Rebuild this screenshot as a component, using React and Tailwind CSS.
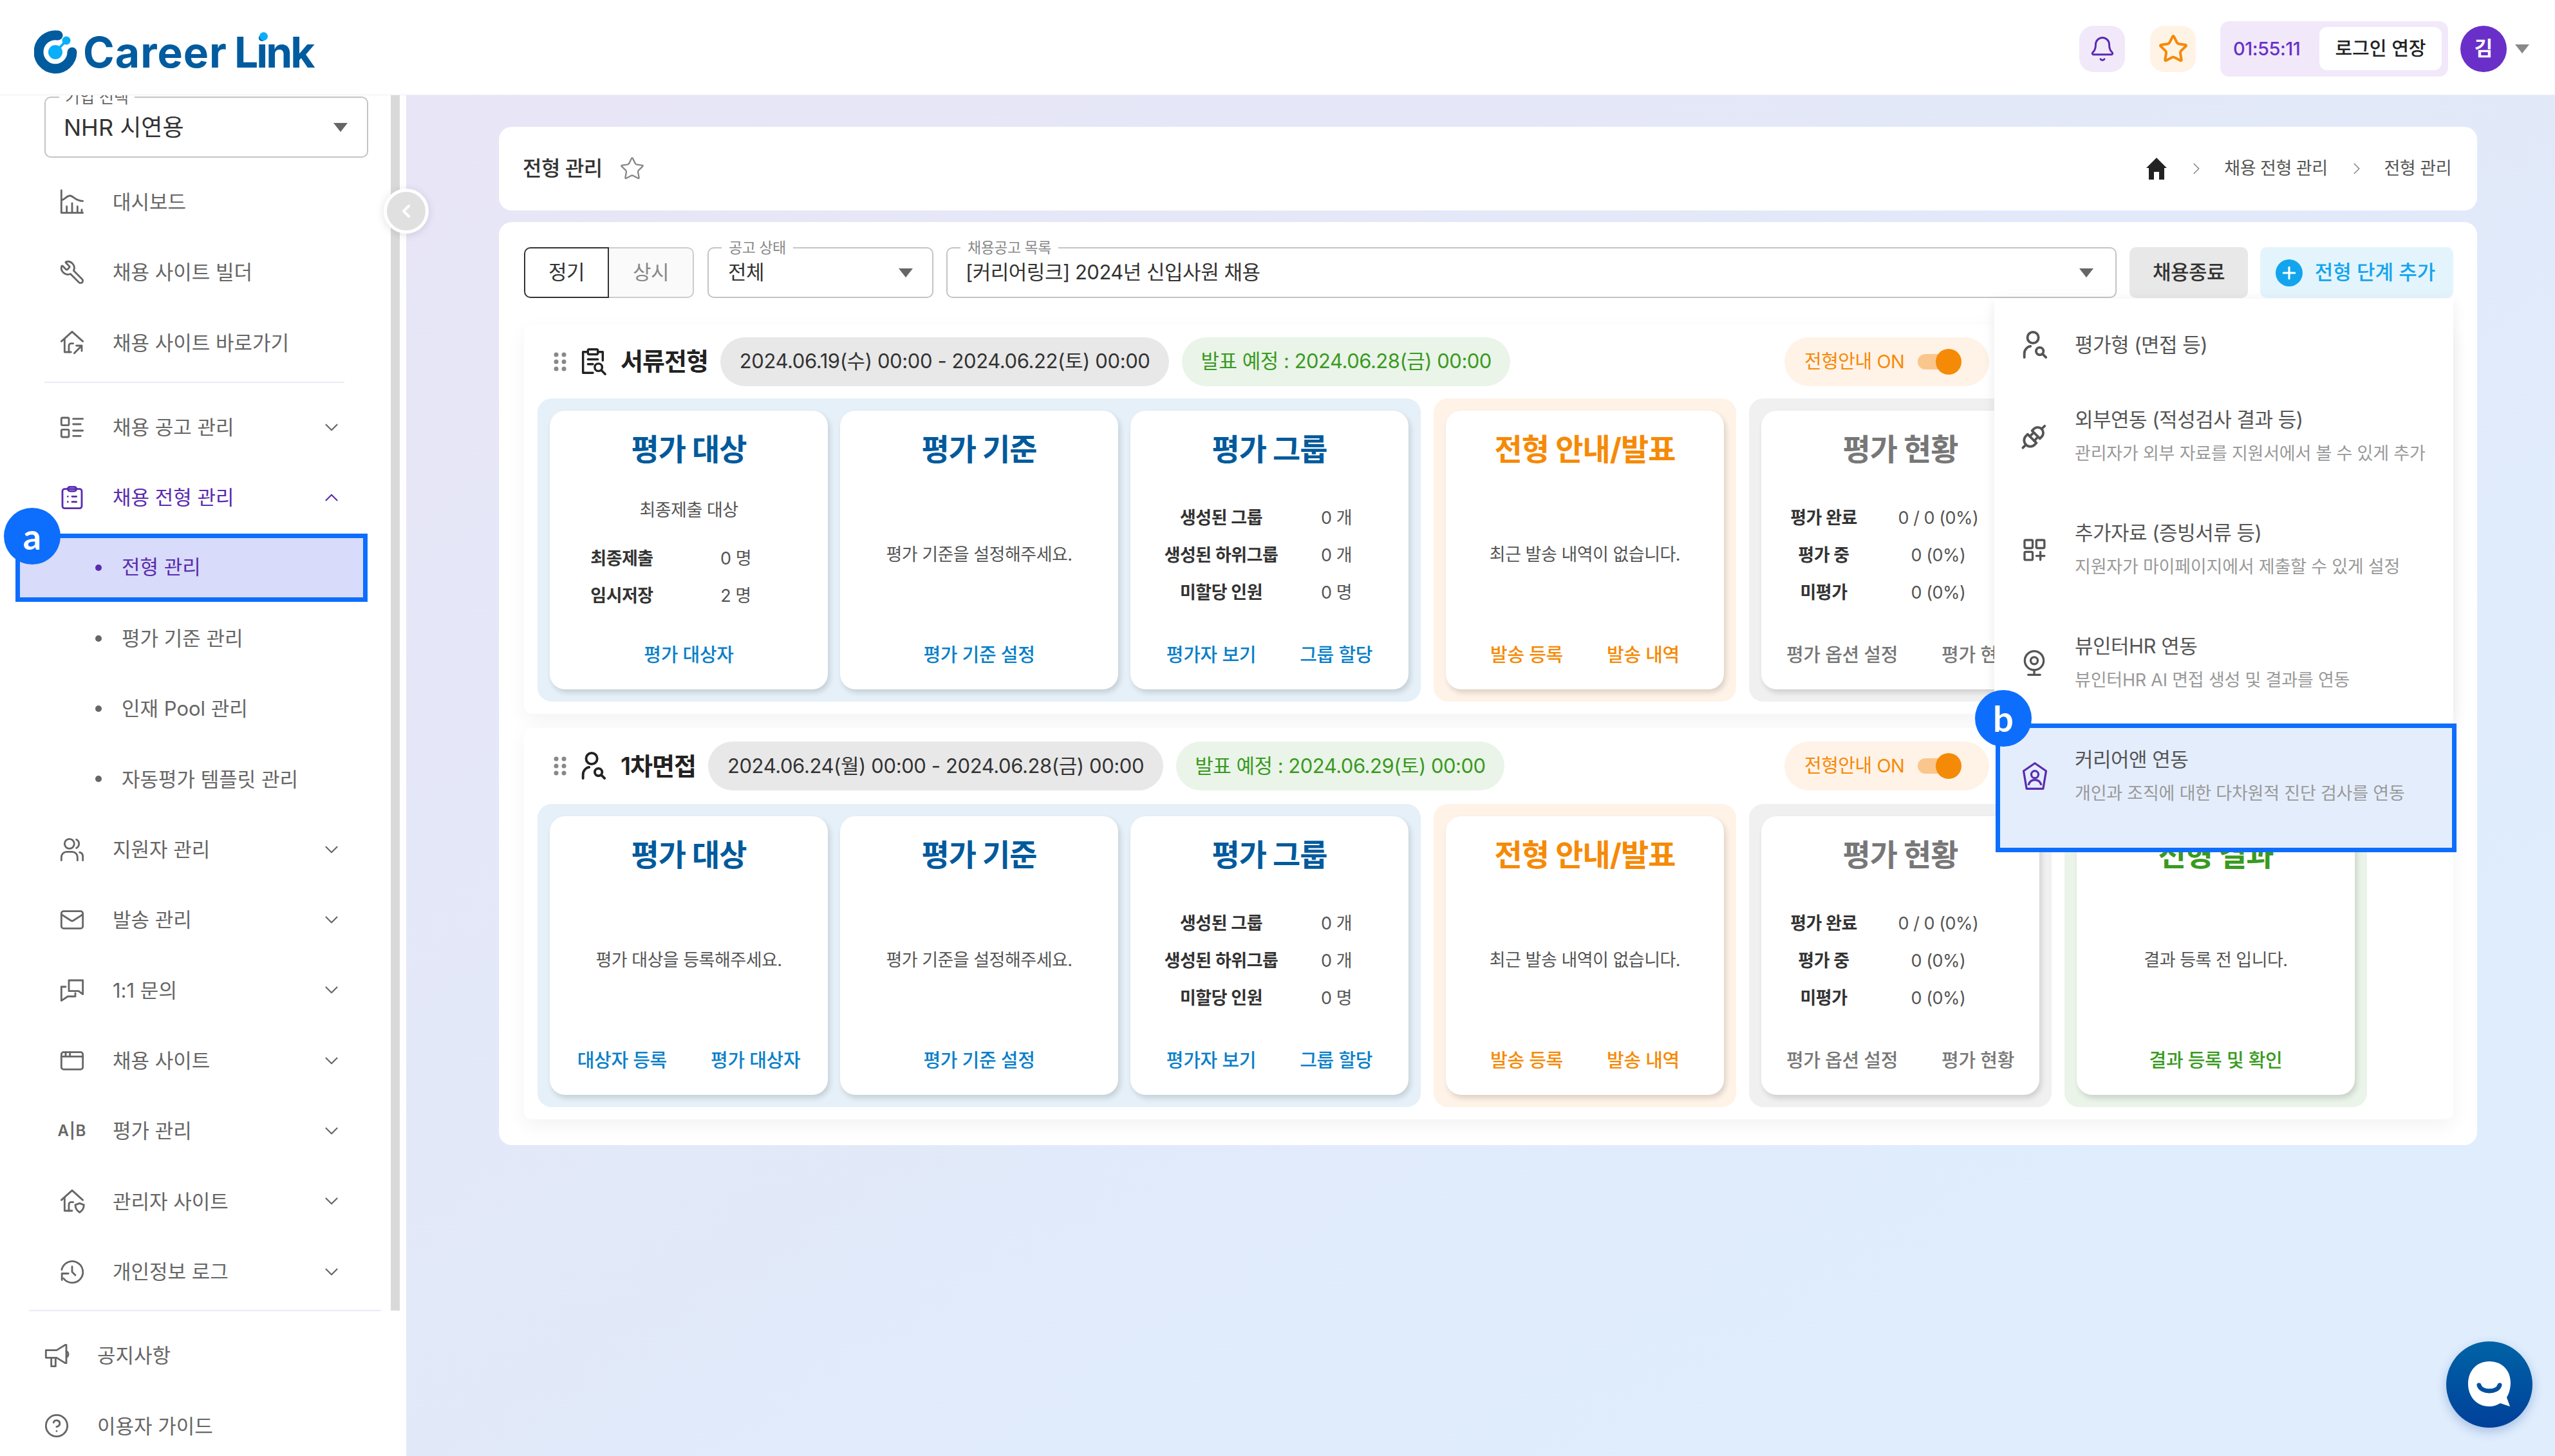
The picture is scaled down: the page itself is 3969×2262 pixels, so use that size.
import React from 'react';
import { ChevronDown, ChevronUp, ChevronLeft, ChevronRight, Wrench, Mail, AppWindow, CircleHelp, Star, Bell, Plus, Webcam } from 'lucide-react';

const Svg = ({ children, size = 40, className = '', stroke = 1.7 }) => (
  <svg width={size} height={size} viewBox="0 0 24 24" fill="none" stroke="currentColor" strokeWidth={stroke} strokeLinecap="round" strokeLinejoin="round" className={className}>
    {children}
  </svg>
);

const ChartIcon = () => (
  <Svg size={42}>
    <path d="M2 1v21h20" />
    <path d="M2 10c3 0 5-4 8-4s5 5 12 5" />
    <path d="M7 22v-6M12 22v-9M17 22v-6M21 22v-3" />
  </Svg>
);
const HomeLinkIcon = () => (
  <Svg size={42}>
    <path d="M2 11 12 2l10 9" />
    <path d="M5 9v12h6" />
    <path d="M9 21v-6a2 2 0 0 1 2-2h2" />
    <path d="M14 22l7-7M16 15h5v5" />
  </Svg>
);
const ListIcon = () => (
  <Svg>
    <rect x="2" y="3" width="7" height="7" rx="1" />
    <rect x="2" y="14" width="7" height="7" rx="1" />
    <path d="M13 4h9M13 9h7M13 15h9M13 20h7" />
  </Svg>
);
const ClipboardIcon = () => (
  <Svg>
    <rect x="3" y="4" width="18" height="18" rx="2" />
    <rect x="8" y="2" width="8" height="4" rx="2" />
    <path d="M8 11h.01M12 11h4M8 16h.01M12 16h4" />
  </Svg>
);
const UsersIcon = () => (
  <Svg>
    <circle cx="9.500" cy="6.500" r="4.500" />
    <path d="M16 2.500a4.500 4.500 0 0 1 0 8" />
    <path d="M2 22v-3a5 5 0 0 1 5-5h5a5 5 0 0 1 5 5v3" />
    <path d="M19 14.500a4 4 0 0 1 3 4V22" />
  </Svg>
);
const ChatIcon = () => (
  <Svg>
    <path d="M9 3h13v13l-4-3H9z" />
    <path d="M6 9H2v13l6-4h7v-3" />
  </Svg>
);
const AdminHomeIcon = () => (
  <Svg size={42}>
    <path d="M2 11 12 2l10 9" />
    <path d="M5 9v12h7" />
    <path d="M9 21v-6a2 2 0 0 1 2-2h2" />
    <path d="M15 15.500l4-1.500 4 1.500c0 3.500-1.500 5.500-4 7-2.500-1.500-4-3.500-4-7z" />
  </Svg>
);
const HistoryIcon = () => (
  <Svg>
    <path d="M2.300 10A10 10 0 1 1 4 18" />
    <path d="M2.500 19.500v-6h6" />
    <path d="M12 7v5l3 3" />
  </Svg>
);
const MegaphoneIcon = () => (
  <Svg>
    <path d="M2 7h10l8-5h1v17h-1l-8-5H2z" />
    <path d="M21 8a3 3 0 0 1 0 5.500" />
    <path d="M7 14v8h4v-8" />
  </Svg>
);
const SearchDocIcon = () => (
  <Svg size={46} stroke={1.8}>
    <path d="M7 4H4v17h8" />
    <path d="M17 4h3v7" />
    <rect x="8" y="2" width="8" height="4" rx="1" />
    <path d="M8 10h8M8 14h4" />
    <circle cx="16.500" cy="16.500" r="3" />
    <path d="M19 19l3 3" />
  </Svg>
);
const PersonSearchIcon = ({ size = 46 }) => (
  <Svg size={size} stroke={2}>
    <circle cx="11" cy="6" r="4.500" />
    <path d="M4 22v-3a6 6 0 0 1 5-6" />
    <circle cx="16.500" cy="17" r="3" />
    <path d="M19 19.500l2.500 2.500" />
  </Svg>
);
const PlugIcon = () => (
  <Svg size={46} stroke={2}>
    <g transform="rotate(45 12 12)">
      <path d="M7.500 10h9V8a4.500 4.500 0 0 0-9 0z" />
      <path d="M12 3.500V0" />
      <path d="M7 14.500h10v2a5 5 0 0 1-10 0z" />
      <path d="M12 21.500V25" />
      <path d="M9.500 14.500v-3M14.500 14.500v-3" />
    </g>
  </Svg>
);
const GridPlusIcon = () => (
  <Svg stroke={2}>
    <rect x="3" y="3" width="7.500" height="7.500" rx="1" />
    <rect x="14" y="3" width="7.500" height="7.500" rx="1" />
    <rect x="3" y="14" width="7.500" height="7.500" rx="1" />
    <path d="M17.750 14v7.500M14 17.750h7.500" />
  </Svg>
);
const PentagonIcon = () => (
  <svg width="44" height="46" viewBox="0 0 44 50" fill="none" stroke="#5a2bb0" strokeWidth="3.500" strokeLinejoin="round">
    <path d="M22 3 41 16l-5 30H8L3 16z" />
    <circle cx="22" cy="22" r="6" />
    <path d="M11 40c2-7 6-9 11-9s9 2 11 9" />
  </svg>
);
const HomeIcon = () => (
  <svg width="32" height="34" viewBox="0 0 32 34" className="text-[#222]">
    <path d="M16 0 32 16h-4v18h-8V22h-8v12H4V16H0z" fill="currentColor" />
  </svg>
);
const Caret = ({ className = '' }) => (
  <svg width="22" height="14" viewBox="0 0 22 14" className={className}>
    <path d="M0 0h22L11 14z" fill="currentColor" />
  </svg>
);
const DragDots = () => (
  <svg width="20" height="30" viewBox="0 0 20 30" fill="#888">
    {[4, 15, 26].map((y) => (
      <g key={y}>
        <circle cx="4" cy={y} r="3.500" />
        <circle cx="16" cy={y} r="3.500" />
      </g>
    ))}
  </svg>
);

const Logo = () => (
  <div className="flex items-center ml-[53px] mt-[14px]">
    <svg width="68" height="68" viewBox="0 0 68 68" fill="none">
      <path d="M37 8A26 26 0 1 0 59 34" stroke="#005b9f" strokeWidth="15" strokeLinecap="round" />
      <path d="M33 34 50 16" stroke="#0aaefb" strokeWidth="4" />
      <circle cx="33" cy="34" r="11" fill="#0aaefb" />
      <circle cx="50" cy="16" r="6.500" fill="#0aaefb" />
    </svg>
    <span className="ml-[8px] text-[66px] leading-none font-bold text-[#005b9f] tracking-[1px]">
      Career
      <span className="relative ml-[11px] tracking-[-3px]">
        Link
        <span className="absolute left-[39px] top-[9px] w-[13px] h-[13px] rounded-full bg-[#0aaefb]" />
      </span>
    </span>
  </div>
);

const Header = () => (
  <header className="relative z-20 h-[148px] bg-white flex items-center justify-between border-b border-[#eceef7]">
    <Logo />
    <div className="flex items-center mt-[4px]">
      <div className="w-[71px] h-[72px] rounded-[22px] bg-[#f1e9fa] flex items-center justify-center text-[#5a2bb0]">
        <Bell size={42} strokeWidth={1.7} />
      </div>
      <div className="ml-[39px] w-[71px] h-[72px] rounded-[22px] bg-[#fff3e6] flex items-center justify-center text-[#f58a07]">
        <Star size={48} strokeWidth={2} />
      </div>
      <div className="ml-[38px] w-[354px] h-[86px] rounded-[14px] bg-[#f1e9fa] flex items-center pl-[20px] pr-[10px] justify-between">
        <span className="text-[29px] font-medium text-[#6b30c9] tracking-[-0.5px]">01:55:11</span>
        <button className="w-[190px] h-[67px] rounded-[12px] bg-white text-[29px] font-medium text-[#222]">로그인 연장</button>
      </div>
      <div className="ml-[19px] w-[72px] h-[72px] rounded-full bg-[#6a2fc8] flex items-center justify-center text-white text-[31px] font-bold">김</div>
      <Caret className="ml-[13px] mr-[40px] text-[#888]" />
    </div>
  </header>
);

const SideItem = ({ icon, label, open, hasChevron = true, active }) => (
  <div className={`h-[109.33px] flex items-center pl-[92px] pr-[99px] ${active ? 'text-[#5a2bb0]' : 'text-[#666]'}`}>
    <span className="w-[40px] flex justify-center">{icon}</span>
    <span className="ml-[43px] text-[31px] leading-none flex-1">{label}</span>
    {hasChevron && (open ? <ChevronUp size={34} strokeWidth={1.5} /> : <ChevronDown size={34} strokeWidth={1.5} />)}
  </div>
);

const SubItem = ({ label }) => (
  <div className="h-[109.33px] flex items-center pl-[148px] text-[#666]">
    <span className="w-[10px] h-[10px] rounded-full bg-[#666]" />
    <span className="ml-[31px] text-[31px] leading-none">{label}</span>
  </div>
);

const Sidebar = () => (
  <aside className="relative w-[631px] shrink-0 h-full bg-white overflow-hidden">
    <div className="absolute left-[607px] top-0 w-[14px] h-[1888px] bg-[#d9d9d9]" />
    <div className="pt-[2px] pl-[69px]">
      <div className="relative w-[503px] h-[95px] border-2 border-[#c4c4c4] rounded-[10px] flex items-center justify-between pl-[28px] pr-[30px]">
        <span className="absolute left-[21px] -top-[16px] bg-white px-[9px] text-[25px] leading-[30px] text-[#666]">기업 선택</span>
        <span className="text-[36px] text-[#333]">NHR 시연용</span>
        <Caret className="text-[#666]" />
      </div>
    </div>
    <div className="mt-[14px]">
      <SideItem hasChevron={false} icon={<ChartIcon />} label="대시보드" />
      <SideItem hasChevron={false} icon={<Wrench size={40} strokeWidth={1.7} className="-scale-x-100" />} label="채용 사이트 빌더" />
      <SideItem hasChevron={false} icon={<HomeLinkIcon />} label="채용 사이트 바로가기" />
    </div>
    <div className="mt-[6px] mb-[14px] ml-[69px] w-[466px] h-[2px] bg-[#ebebf7]" />
    <SideItem icon={<ListIcon />} label="채용 공고 관리" />
    <SideItem active open icon={<ClipboardIcon />} label="채용 전형 관리" />
    <div className="h-[109.33px] flex items-center">
      <div className="ml-[24px] w-[547px] h-[106px] bg-[#d8dbf9] border-[7px] border-[#0d6efd] flex items-center pl-[117px] text-[#5a2bb0]">
        <span className="w-[10px] h-[10px] rounded-full bg-[#5a2bb0]" />
        <span className="ml-[31px] text-[31px] leading-none -mt-[4px]">전형 관리</span>
      </div>
    </div>
    <SubItem label="평가 기준 관리" />
    <SubItem label="인재 Pool 관리" />
    <SubItem label="자동평가 템플릿 관리" />
    <SideItem icon={<UsersIcon />} label="지원자 관리" />
    <SideItem icon={<Mail size={40} strokeWidth={1.7} />} label="발송 관리" />
    <SideItem icon={<ChatIcon />} label="1:1 문의" />
    <SideItem icon={<AppWindow size={40} strokeWidth={1.7} />} label="채용 사이트" />
    <SideItem icon={<span className="text-[24px] font-semibold tracking-[1px]">A|B</span>} label="평가 관리" />
    <SideItem icon={<AdminHomeIcon />} label="관리자 사이트" />
    <SideItem icon={<HistoryIcon />} label="개인정보 로그" />
    <div className="mt-[5px] mb-[14px] ml-[45px] w-[547px] h-[2px] bg-[#ebebf7]" />
    <div className="h-[109.33px] flex items-center pl-[68px] text-[#666]">
      <MegaphoneIcon />
      <span className="ml-[43px] text-[31px] leading-none">공지사항</span>
    </div>
    <div className="h-[109.33px] flex items-center pl-[68px] text-[#666]">
      <CircleHelp size={40} strokeWidth={1.7} />
      <span className="ml-[43px] text-[31px] leading-none">이용자 가이드</span>
    </div>
  </aside>
);

const tones = {
  blue: { group: 'bg-[#e5f0f8]', title: 'text-[#005a9c]', link: 'text-[#0a7fc9]' },
  orange: { group: 'bg-[#fff2e7]', title: 'text-[#f58a07]', link: 'text-[#f58a07]' },
  gray: { group: 'bg-[#f0f0f0]', title: 'text-[#777]', link: 'text-[#777]' },
  green: { group: 'bg-[#eaf4e9]', title: 'text-[#3a9a1f]', link: 'text-[#3a9a1f]' },
};

const Rows = ({ rows, labelW, valueW }) => (
  <div className="flex flex-col gap-[22px]">
    {rows.map(([label, value]) => (
      <div key={label} className="flex items-center justify-center text-[27px] leading-[36px] tracking-[-0.5px]">
        <span className={`${labelW} text-center font-semibold text-[#333]`}>{label}</span>
        <span className={`${valueW} text-center text-[#555]`}>{value}</span>
      </div>
    ))}
  </div>
);

const Card = ({ tone, title, links, children }) => (
  <div className="w-[432px] h-full bg-white rounded-[24px] shadow-[3px_5px_8px_rgba(0,0,0,0.14)] flex flex-col">
    <div className={`h-[114px] pt-[6px] flex items-center justify-center text-[47px] font-bold tracking-[-1px] ${tones[tone].title}`}>{title}</div>
    <div className="flex-1 pt-[8px] flex flex-col items-center justify-center text-[27px] tracking-[-0.5px] text-[#555]">{children}</div>
    <div className={`h-[106px] flex items-start justify-center gap-[68px] pt-[33px] text-[29px] leading-[40px] font-medium tracking-[-0.3px] ${tones[tone].link}`}>
      {links.map((l) => (
        <span key={l}>{l}</span>
      ))}
    </div>
  </div>
);

const Group = ({ tone, children }) => (
  <div className={`h-full rounded-[22px] py-[19px] px-[19px] flex gap-[19px] ${tones[tone].group}`}>{children}</div>
);

const Stage = ({ icon, title, dates, notice, first, className = '' }) => (
  <section className={`bg-white rounded-[12px] shadow-[0_10px_30px_rgba(0,0,0,0.05)] pl-[21px] pb-[19px] ${className}`}>
    <div className={`flex items-center pl-[25px] pr-[721px] ${first ? 'h-[115px]' : 'h-[118px]'}`}>
      <DragDots />
      <span className="ml-[18px] w-[46px] flex justify-center text-[#222]">{icon}</span>
      <span className="ml-[20px] text-[38px] font-semibold tracking-[-1px] text-[#222]">{title}</span>
      <span className="ml-[19px] h-[76px] rounded-full bg-[#e8e8e8] px-[30px] flex items-center text-[31px] font-normal tracking-[-0.4px] text-[#333]">{dates}</span>
      <span className="ml-[20px] h-[76px] rounded-full bg-[#eaf4e9] px-[29px] flex items-center text-[31px] tracking-[-0.5px] text-[#3a9a1f]">{notice}</span>
      <div className="ml-auto h-[76px] w-[318px] rounded-full bg-[#fff2e7] flex items-center pl-[31px] text-[29px] tracking-[-0.5px] text-[#f58a07]">
        전형안내 ON
        <div className="relative ml-[21px] w-[58px] h-[24px] rounded-full bg-[#fbc68c]">
          <span className="absolute -right-[10px] -top-[8px] w-[40px] h-[40px] rounded-full bg-[#f58a07]" />
        </div>
      </div>
    </div>
    <div className="h-[471px] flex gap-5">
      <Group tone="blue">
        <Card tone="blue" title="평가 대상" links={first ? ['평가 대상자'] : ['대상자 등록', '평가 대상자']}>
          {first ? (
            <>
              <span className="mb-[37px] -mt-[8px]">최종제출 대상</span>
              <Rows rows={[['최종제출', '0 명'], ['임시저장', '2 명']]} labelW="w-[146px]" valueW="w-[208px]" />
            </>
          ) : (
            '평가 대상을 등록해주세요.'
          )}
        </Card>
        <Card tone="blue" title="평가 기준" links={['평가 기준 설정']}>
          평가 기준을 설정해주세요.
        </Card>
        <Card tone="blue" title="평가 그룹" links={['평가자 보기', '그룹 할당']}>
          <Rows rows={[['생성된 그룹', '0 개'], ['생성된 하위그룹', '0 개'], ['미할당 인원', '0 명']]} labelW="w-[208px]" valueW="w-[150px]" />
        </Card>
      </Group>
      <Group tone="orange">
        <Card tone="orange" title="전형 안내/발표" links={['발송 등록', '발송 내역']}>
          최근 발송 내역이 없습니다.
        </Card>
      </Group>
      <Group tone="gray">
        <Card tone="gray" title="평가 현황" links={['평가 옵션 설정', '평가 현황']}>
          <Rows rows={[['평가 완료', '0 / 0 (0%)'], ['평가 중', '0 (0%)'], ['미평가', '0 (0%)']]} labelW="w-[118px]" valueW="w-[238px]" />
        </Card>
      </Group>
      <Group tone="green">
        <Card tone="green" title="전형 결과" links={['결과 등록 및 확인']}>
          결과 등록 전 입니다.
        </Card>
      </Group>
    </div>
  </section>
);

const Bubble = ({ letter, className }) => (
  <div className={`absolute z-30 w-[88px] h-[88px] rounded-full bg-[#0d6efd] flex items-center justify-center text-white text-[56px] leading-none font-bold font-['Lato',sans-serif] ${className}`}>
    {letter}
  </div>
);

const MenuText = ({ title, sub }) => (
  <div>
    <div className="text-[31px] leading-[40px] text-[#555] tracking-[-0.5px]">{title}</div>
    {sub && <div className="mt-[14px] text-[27px] leading-[38px] text-[#999] tracking-[-0.2px]">{sub}</div>}
  </div>
);

const MenuItem = ({ icon, title, sub }) => (
  <div className="h-[176px] flex items-center">
    <span className="w-[125px] pr-[2px] flex justify-center text-[#555]">{icon}</span>
    <MenuText title={title} sub={sub} />
  </div>
);

const StageMenu = () => (
  <div className="absolute z-10 left-[2467px] top-[316px] w-[713px] h-[666px] bg-white shadow-[0_4px_20px_rgba(0,0,0,0.08)]">
    <div className="h-[126px] pt-[18px] flex items-center">
      <span className="w-[125px] pr-[2px] flex justify-center text-[#555]"><PersonSearchIcon /></span>
      <MenuText title="평가형 (면접 등)" />
    </div>
    <MenuItem icon={<PlugIcon />} title="외부연동 (적성검사 결과 등)" sub="관리자가 외부 자료를 지원서에서 볼 수 있게 추가" />
    <MenuItem icon={<GridPlusIcon />} title="추가자료 (증빙서류 등)" sub="지원자가 마이페이지에서 제출할 수 있게 설정" />
    <MenuItem icon={<Webcam size={44} strokeWidth={1.8} />} title="뷰인터HR 연동" sub="뷰인터HR AI 면접 생성 및 결과를 연동" />
    <div className="relative z-20 ml-[2px] mt-[6px] w-[716px] h-[200px] bg-[#e4edfc] border-[7px] border-[#0d6efd] flex items-center pb-[36px]">
      <span className="w-[116px] pr-[8px] flex justify-center"><PentagonIcon /></span>
      <MenuText title="커리어앤 연동" sub="개인과 조직에 대한 다차원적 진단 검사를 연동" />
    </div>
  </div>
);

const Main = () => (
  <main className="relative flex-1 h-full bg-gradient-to-br from-[#e8e5f6] via-[#e2e9f9] via-45% to-[#dfedfd] to-80% pl-[144px] pr-[121px] pt-[49px]">
    <div className="h-[130px] bg-white rounded-[20px] flex items-center justify-between pl-[37px] pr-[40px]">
      <div className="flex items-center gap-[26px]">
        <span className="text-[32px] font-medium tracking-[-0.5px] text-[#333]">전형 관리</span>
        <Star size={40} strokeWidth={1.4} className="text-[#888]" />
      </div>
      <div className="flex items-center text-[27px] tracking-[-0.5px] text-[#555]">
        <HomeIcon />
        <ChevronRight size={30} strokeWidth={1.3} className="ml-[31px] mr-[28px] text-[#888]" />
        <span>채용 전형 관리</span>
        <ChevronRight size={30} strokeWidth={1.3} className="ml-[30px] mr-[28px] text-[#888]" />
        <span>전형 관리</span>
      </div>
    </div>
    <div className="mt-[18px] bg-white rounded-[20px] pt-[39px] pl-[39px] pr-[37px] pb-[40px]">
      <div className="h-[79px] flex items-stretch text-[31px] tracking-[-0.5px]">
        <button className="w-[132px] border-2 border-[#333] rounded-l-[10px] text-[#333]">정기</button>
        <button className="w-[132px] border-2 border-l-0 border-[#ccc] rounded-r-[10px] bg-[#fafafa] text-[#888]">상시</button>
        <div className="relative ml-[21px] w-[351px] border-2 border-[#c4c4c4] rounded-[10px] flex items-center justify-between pl-[30px] pr-[30px] text-[#333]">
          <span className="absolute left-[20px] -top-[15px] bg-white px-[11px] text-[23px] leading-[28px] text-[#888]">공고 상태</span>
          전체
          <Caret className="text-[#666]" />
        </div>
        <div className="relative ml-[20px] w-[1818px] border-2 border-[#c4c4c4] rounded-[10px] flex items-center justify-between pl-[28px] pr-[34px] text-[#333]">
          <span className="absolute left-[20px] -top-[15px] bg-white px-[11px] text-[23px] leading-[28px] text-[#888]">채용공고 목록</span>
          [커리어링크] 2024년 신입사원 채용
          <Caret className="text-[#666]" />
        </div>
        <button className="ml-[20px] w-[184px] rounded-[10px] bg-[#e8e8e8] font-medium text-[#333]">채용종료</button>
        <button className="ml-[19px] w-[300px] pr-[4px] rounded-[10px] bg-[#e4f4fd] flex items-center justify-center gap-[19px] font-medium tracking-[0px] text-[#12a5ee]">
          <span className="w-[42px] h-[42px] rounded-full bg-[#12a5ee] text-white flex items-center justify-center"><Plus size={30} strokeWidth={2.5} /></span>
          전형 단계 추가
        </button>
      </div>
      <Stage first className="mt-[41px]" icon={<SearchDocIcon />} title="서류전형" dates="2024.06.19(수) 00:00 - 2024.06.22(토) 00:00" notice="발표 예정 : 2024.06.28(금) 00:00" />
      <Stage className="mt-[22px]" icon={<PersonSearchIcon />} title="1차면접" dates="2024.06.24(월) 00:00 - 2024.06.28(금) 00:00" notice="발표 예정 : 2024.06.29(토) 00:00" />
    </div>
    <StageMenu />
    <Bubble letter="b" className="left-[2437px] top-[924px]" />
    <div className="absolute -left-[35px] top-[145px] z-10 w-[70px] h-[70px] rounded-full bg-[#e0e0e0] border-[5px] border-white shadow-[0_2px_14px_rgba(0,0,0,0.12)] flex items-center justify-center text-white">
      <ChevronLeft size={32} strokeWidth={3} />
    </div>
  </main>
);

const App = () => (
  <div className="relative w-[3969px] h-[2262px] overflow-hidden font-[Inter,'Noto_Sans_CJK_KR',sans-serif]">
    <Header />
    <div className="flex h-[2114px]">
      <Sidebar />
      <Main />
    </div>
    <Bubble letter="a" className="left-[6px] top-[789px]" />
    <div className="absolute left-[3800px] top-[2084px] z-30 w-[134px] h-[134px] rounded-full bg-gradient-to-b from-[#0063a6] to-[#00409a] shadow-[0_6px_16px_rgba(0,60,150,0.25)] flex items-center justify-center">
      <svg width="76" height="78" viewBox="0 0 76 78">
        <path d="M38 3c20 0 33 14 33 33 0 10-3 18-6 23l5 14-15-5c-5 3-11 5-17 5C18 73 5 57 5 38 5 18 18 3 38 3z" fill="#fff" />
        <path d="M22 40c3 12 29 12 32 0" fill="none" stroke="#00509f" strokeWidth="7" strokeLinecap="round" />
      </svg>
    </div>
  </div>
);

export default App;
